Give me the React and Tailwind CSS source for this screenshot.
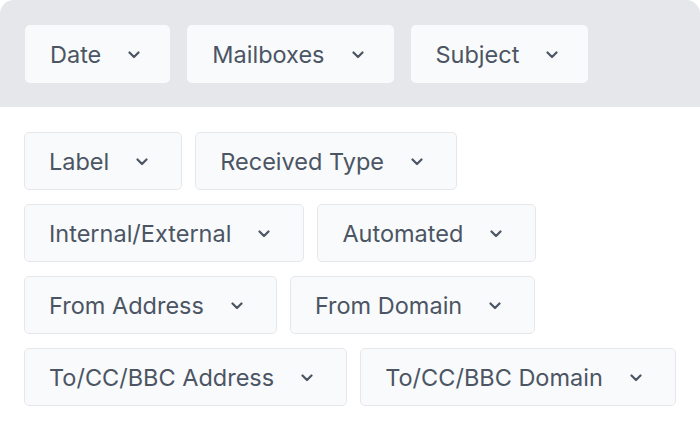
function Chevron() {
  return (
    <svg width="12" height="8" viewBox="0 0 12 8" fill="none" aria-hidden="true" className="shrink-0">
      <path d="M1.5 1.5L6 6l4.5-4.5" stroke="currentColor" strokeWidth="2.2" strokeLinecap="round" strokeLinejoin="round" />
    </svg>
  )
}

function FilterButton({ label, bordered }) {
  return (
    <button
      className={
        'flex items-center gap-[27px] h-[58px] pl-6 pt-[2px] rounded-[5px] bg-[#f9fafb] text-[#4b5563] text-[23.5px] leading-7 whitespace-nowrap ' +
        (bordered ? 'pr-[33px] border border-[#e5e7eb]' : 'pr-[29px] border border-transparent')
      }
    >
      <span>{label}</span>
      <Chevron />
    </button>
  )
}

const rows = [
  ['Label', 'Received Type'],
  ['Internal/External', 'Automated'],
  ['From Address', 'From Domain'],
  ['To/CC/BBC Address', 'To/CC/BBC Domain'],
]

export default function App() {
  return (
    <div
      className="w-[700px] h-[430px] bg-white overflow-hidden rounded-[14px] flex flex-col"
      style={{ fontFamily: 'Inter, "Noto Sans", sans-serif' }}
    >
      {/* Top filters */}
      <div className="bg-[#e5e7eb] h-[107px] shrink-0 px-[25px] pt-[25px] flex items-start gap-[17px]">
        <FilterButton label="Date" />
        <FilterButton label="Mailboxes" />
        <FilterButton label="Subject" />
      </div>

      {/* More filters */}
      <div className="flex flex-col gap-[14px] px-6 pt-[25px]">
        {rows.map((row) => (
          <div key={row[0]} className="flex gap-[13px]">
            {row.map((label) => (
              <FilterButton key={label} label={label} bordered />
            ))}
          </div>
        ))}
      </div>
    </div>
  )
}
